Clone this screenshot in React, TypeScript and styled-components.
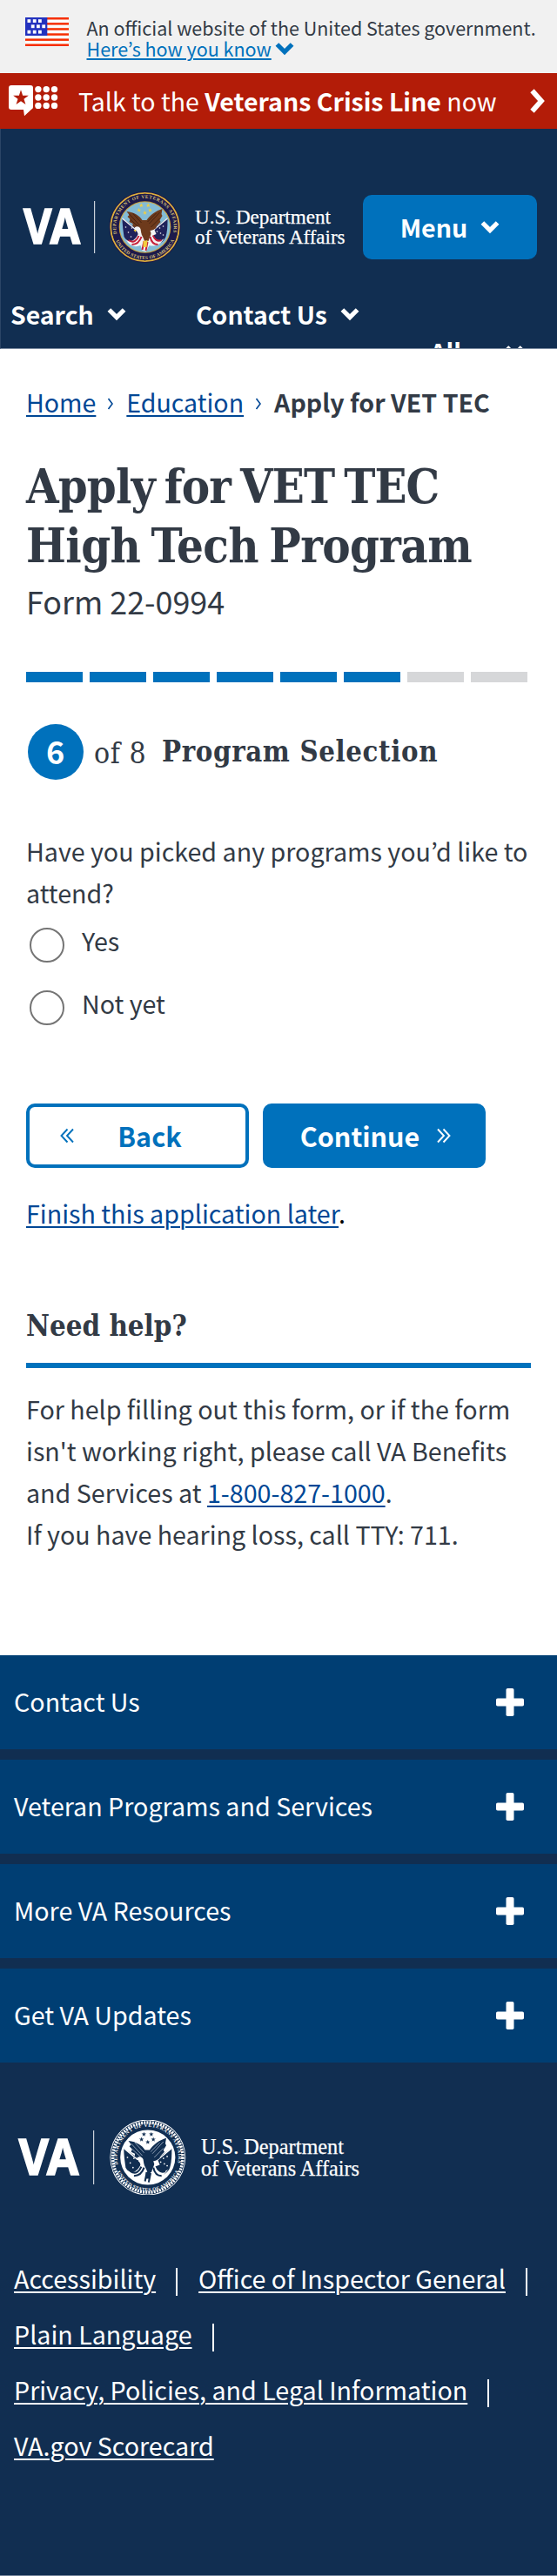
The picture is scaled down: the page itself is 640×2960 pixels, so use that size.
import React from "react";
import styled, { createGlobalStyle, css } from "styled-components";

const sans = `"Noto Sans CJK JP", "Noto Sans", sans-serif`;
const slab = `"DejaVu Serif Condensed", "DejaVu Serif", serif`;

const color = {
  ink: "#323a45",
  primary: "#0071bc",
  link: "#004795",
  navy: "#112e51",
  footerBar: "#003e73",
  crisis: "#b31c08",
  gray: "#d6d7d9",
};

const GlobalStyle = createGlobalStyle`
  *, *::before, *::after { box-sizing: border-box; }
  body {
    margin: 0;
    background: #fff;
    color: ${color.ink};
    font-family: ${sans};
    font-size: 28.65px;
    line-height: 48px;
  }
  h1, h2, p, ul, ol, fieldset { margin: 0; padding: 0; border: 0; }
  ul, ol { list-style: none; }
  button { font: inherit; margin: 0; padding: 0; cursor: pointer; }
  svg { display: block; flex: none; }
`;

const Page = styled.div`
  width: 640px;
  overflow: hidden;
`;

/* ---------- government banner ---------- */

const GovBanner = styled.div`
  display: flex;
  height: 84px;
  padding: 20px 0 0 29px;
  background: #f1f1f1;
  font-size: 21.5px;
  line-height: 24px;
`;

const GovText = styled.div`
  margin-left: 20.5px;
  white-space: nowrap;
`;

const GovLink = styled.a`
  color: ${color.primary};
  text-decoration: underline;
  text-decoration-thickness: 2px;
  text-underline-offset: 2px;
`;

const GovToggle = styled.div`
  display: flex;
  align-items: center;
  gap: 4px;
  color: ${color.primary};
`;

/* ---------- crisis line ---------- */

const CrisisLine = styled.a`
  display: flex;
  align-items: center;
  height: 64px;
  padding: 0 12px 0 10px;
  background: ${color.crisis};
  color: #fff;
  font-size: 28.5px;
  white-space: nowrap;
`;

const CrisisText = styled.span`
  margin-left: 23px;
  flex: 1;
`;

/* ---------- header ---------- */

const Header = styled.header`
  height: 253px;
  overflow: hidden;
  background: ${color.navy};
  color: #fff;
  border-left: 1px solid #2b4566;
  border-bottom: 1px solid #75859b;
`;

const HeaderTop = styled.div`
  display: flex;
  align-items: center;
  justify-content: space-between;
  height: 191px;
  padding: 35px 23px 0 0;
`;

const MenuButton = styled.button`
  display: flex;
  align-items: center;
  justify-content: center;
  gap: 15px;
  width: 200px;
  height: 74px;
  border: 0;
  border-radius: 10px;
  background: ${color.primary};
  color: #fff;
  font-weight: 700;
  line-height: 74px;
`;

const UserNav = styled.nav`
  display: flex;
  flex-wrap: wrap;
  line-height: 44px;
  font-size: 28.4px;
  font-weight: 700;
  padding-left: 11px;
`;

const NavItem = styled.a<{ $width?: number }>`
  display: flex;
  align-items: center;
  gap: 15px;
  width: ${(p) => (p.$width ? `${p.$width}px` : "auto")};
  color: #fff;
`;

const NavUser = styled(NavItem)`
  width: 100%;
  justify-content: flex-end;
  padding-right: 38px;
  line-height: 42px;
`;

/* ---------- main ---------- */

const Main = styled.main`
  padding: 37px 30px 0;
`;

const linkStyle = css`
  color: ${color.link};
  text-decoration: underline;
  text-decoration-thickness: 2px;
  text-underline-offset: 3px;
`;

const Link = styled.a`
  ${linkStyle}
`;

const Crumbs = styled.ol`
  display: flex;
  align-items: center;
  font-size: 28.55px;
  white-space: nowrap;
`;

const Crumb = styled.li`
  display: flex;
  align-items: center;
`;

const CrumbArrow = styled.svg`
  margin: 4px 14px 0 13px;
`;

const CurrentCrumb = styled.li`
  font-weight: 700;
`;

const Title = styled.h1`
  margin-top: 39px;
  font-family: ${slab};
  font-size: 54px;
  font-weight: 700;
  line-height: 68px;
  white-space: nowrap;
`;

const TitleLine = styled.span<{ $tracking: number; $word: number }>`
  display: block;
  letter-spacing: ${(p) => p.$tracking}px;
  word-spacing: ${(p) => p.$word}px;
`;

const FormNumber = styled.p`
  margin-top: 5px;
  font-size: 35.9px;
`;

const Progress = styled.div`
  display: flex;
  gap: 8px;
  margin-top: 58px;
  height: 12px;
`;

const Segment = styled.span<{ $done: boolean }>`
  width: 65px;
  background: ${(p) => (p.$done ? color.primary : color.gray)};
`;

const StepHeading = styled.h2`
  display: flex;
  align-items: center;
  height: 64px;
  margin: 48px 0 0 2px;
  font-family: ${slab};
  font-size: 32.6px;
  font-weight: 700;
  letter-spacing: 0.65px;
  white-space: nowrap;
`;

const StepBadge = styled.span`
  width: 64px;
  height: 64px;
  border-radius: 50%;
  background: ${color.primary};
  color: #fff;
  font-family: ${sans};
  font-size: 36px;
  line-height: 61px;
  text-align: center;
`;

const StepTotal = styled.span`
  width: 78px;
  margin: 4px 0 0 12px;
  font-size: 33.5px;
  font-weight: 400;
  letter-spacing: 0.5px;
`;

const Question = styled.fieldset`
  padding-top: 58px;
`;

const RadioList = styled.div`
  margin-top: 7px;
`;

const RadioRow = styled.label`
  display: flex;
  height: 72px;
`;

const Radio = styled.input`
  appearance: none;
  width: 40px;
  height: 40px;
  margin: 9px 20px 0 4px;
  border: 2px solid #757575;
  border-radius: 50%;
  background: #fff;
`;

const ButtonRow = styled.div`
  display: flex;
  gap: 16px;
  margin-top: 67px;
`;

const FormButton = styled.button<{ $outline?: boolean }>`
  display: flex;
  align-items: center;
  justify-content: center;
  width: 256px;
  height: 74px;
  gap: ${(p) => (p.$outline ? 50 : 20)}px;
  padding: ${(p) => (p.$outline ? "0 38px 0 0" : "0 0 0 3px")};
  border: 4px solid ${color.primary};
  border-radius: 10px;
  background: ${(p) => (p.$outline ? "#fff" : color.primary)};
  color: ${(p) => (p.$outline ? color.primary : "#fff")};
  font-size: 30.5px;
  font-weight: 700;
`;

const FinishLater = styled.p`
  margin-top: 28px;
  color: #000;
`;

const HelpHeading = styled.h2`
  height: 68px;
  margin-top: 86px;
  border-bottom: 6px solid ${color.primary};
  font-family: ${slab};
  font-size: 32.8px;
  font-weight: 700;
  line-height: 40px;
`;

const HelpText = styled.div`
  padding: 23px 0 115px;
`;

/* ---------- footer ---------- */

const Footer = styled.footer`
  height: 1058px;
  background: ${color.navy};
  color: #fff;
  border-bottom: 1px solid #75859b;
`;

const FooterSections = styled.ul`
  display: flex;
  flex-direction: column;
  gap: 12px;
`;

const FooterSection = styled.li`
  display: flex;
  align-items: center;
  justify-content: space-between;
  height: 108px;
  padding: 0 38px 3px 16px;
  background: ${color.footerBar};
`;

const PlusIcon = styled.svg`
  margin-top: 3px;
`;

const FooterLogo = styled.div`
  margin-top: 66px;
`;

const FooterLinks = styled.ul`
  display: flex;
  flex-wrap: wrap;
  margin-top: 64px;
  padding-left: 16px;
  line-height: 64px;
`;

const FooterLinkItem = styled.li`
  display: flex;
  align-items: center;

  &:not(:last-child)::after {
    content: "";
    width: 2px;
    height: 32px;
    margin: 8px 24px 0 23px;
    background: #fff;
  }
`;

const FooterLink = styled.a`
  color: #fff;
  text-decoration: underline;
  text-decoration-thickness: 2px;
  text-underline-offset: 3px;
`;

/* ---------- drawings ---------- */

const Flag = () => (
  <svg width="50" height="33" viewBox="0 0 50 33">
    <rect width="50" height="33" fill="#fbfbfb" />
    {[0, 6.1, 12.2, 18.3, 24.4, 30.5].map((y) => (
      <rect key={y} y={y} width="50" height="2.5" fill="#f62e00" />
    ))}
    <rect width="25.3" height="21" fill="#2332be" />
    {[
      [2.5, 2.2], [8.8, 2.2], [15, 2.2],
      [6.8, 8.4], [13, 8.4], [19.3, 8.4],
      [2.5, 14.8], [8.8, 14.8], [15, 14.8],
    ].map(([x, y]) => (
      <rect key={`${x}-${y}`} x={x} y={y} width="3.8" height="3.8" fill="#fff" />
    ))}
  </svg>
);

const ChevronDown = () => (
  <svg width="22" height="16" viewBox="0 0 22 16">
    <path d="M2.4 3 11 11.6 19.6 3" fill="none" stroke="currentColor" strokeWidth="5.2" />
  </svg>
);

const starPoints = (cx: number, cy: number, r: number) =>
  Array.from({ length: 10 }, (_, i) => {
    const rad = (Math.PI / 5) * i - Math.PI / 2;
    const d = i % 2 ? r * 0.39 : r;
    return `${(cx + d * Math.cos(rad)).toFixed(2)},${(cy + d * Math.sin(rad)).toFixed(2)}`;
  }).join(" ");

const CrisisIcon = () => (
  <svg width="57" height="36" viewBox="0 0 57 36">
    <path d="M3 0h22a3 3 0 0 1 3 3v22a3 3 0 0 1-2 2.8L18 35.2 17 28H3a3 3 0 0 1-3-3V3a3 3 0 0 1 3-3Z" fill="#fff" />
    <polygon points={starPoints(14, 14.6, 9.3)} fill={color.crisis} />
    {[4.6, 14, 23.4].map((y) =>
      [33.9, 43.2, 52.5].map((x) => <circle key={`${x}-${y}`} cx={x} cy={y} r="3.7" fill="#fff" />)
    )}
  </svg>
);

const CrisisArrow = () => (
  <svg width="20" height="30" viewBox="0 0 20 30">
    <path d="M3.5 3.2 14 15 3.5 26.8" fill="none" stroke="#fff" strokeWidth="5.8" />
  </svg>
);

const DoubleArrow = ({ left }: { left?: boolean }) => (
  <svg width="16" height="18" viewBox="0 0 16 18">
    <path
      d={left ? "M8.5 1.5 1.5 9l7 7.5M15 1.5 8 9l7 7.5" : "M1 1.5 8 9l-7 7.5M7.5 1.5 14.5 9l-7 7.5"}
      fill="none"
      stroke="currentColor"
      strokeWidth="1.9"
    />
  </svg>
);

const Plus = () => (
  <PlusIcon width="32" height="32" viewBox="0 0 32 32">
    <rect x="0" y="11.5" width="32" height="9" rx="1.8" fill="#fff" />
    <rect x="11.5" y="0" width="9" height="32" rx="1.8" fill="#fff" />
  </PlusIcon>
);

type SealPalette = {
  edge: string; rim: string; band: string; lettering: string; inner: string; sky: string;
  star: string; wing: string; feather: string; flag: string; red: string; white: string;
};

const colorSeal: SealPalette = {
  edge: "#1d1747", rim: "#dcae3c", band: "#1d1a4b", lettering: "#d9c37a", inner: "#cda43e", sky: "#83bbd6",
  star: "#f3cf3f", wing: "#6e3a1c", feather: "#3f1f10", flag: "#20225a", red: "#c5203a", white: "#f4f4f4",
};

const monoSeal: SealPalette = {
  edge: "#fff", rim: "#fff", band: color.navy, lettering: "#fff", inner: "#fff", sky: "#fff",
  star: color.navy, wing: color.navy, feather: "#8fa0b5", flag: color.navy, red: color.navy, white: "#fff",
};

const Seal = ({ id, c, mono }: { id: string; c: SealPalette; mono?: boolean }) => (
  <g>
    <defs>
      <path id={`${id}-top`} d="M-31.9 9.1A33.2 33.2 0 1 1 31.9 9.1" />
      <path id={`${id}-bottom`} d="M-34.6 13A37 37 0 0 0 34.6 13" />
    </defs>
    <circle r="41" fill={c.edge} />
    {mono ? (
      <>
        <circle r="40.2" fill={c.band} />
        <circle r="37.9" fill="none" stroke="#fff" strokeWidth="3.2" strokeDasharray="1.9 1.1" />
      </>
    ) : (
      <>
        <circle r="39.1" fill="none" stroke={c.rim} strokeWidth="1.9" />
        <circle r="38.2" fill={c.band} />
      </>
    )}
    <circle r="29.8" fill={c.inner} />
    <circle r="28.8" fill={c.sky} />
    <g fill={c.lettering} fontFamily="Liberation Serif, serif" fontWeight="700" fontSize="5.4">
      <text>
        <textPath href={`#${id}-top`} textLength="118" startOffset="1.5">DEPARTMENT OF VETERANS AFFAIRS</textPath>
      </text>
      <text>
        <textPath href={`#${id}-bottom`} textLength="84" startOffset="3">UNITED STATES OF AMERICA</textPath>
      </text>
    </g>
    {[[-4.2, -25], [3.8, -25], [-6.8, -19.5], [6, -19.5], [0, -16.5]].map(([x, y]) => (
      <polygon key={`${x}${y}`} points={starPoints(x, y, 2.7)} fill={c.star} />
    ))}
    <path d="M-26-10-9 2-5 9-12 19C-17 19-21 16-24 11-25 4-26-3-26-10Z" fill={c.flag} />
    <path d="M26-10 10 1 6 9 13 19C18 19 22 16 24 11 26 4 26-3 26-10Z" fill={c.flag} />
    <path d="M-26-10-8 5M26-10 9 4" stroke={c.white} strokeWidth="1.3" />
    {[[-22, 0], [-19, 6], [-15, 1], [-16, 11], [21, -1], [17, 1], [18, 7], [21, 9], [14, 5]].map(([x, y]) => (
      <circle key={`${x}${y}`} cx={x} cy={y} r="0.8" fill={c.white} />
    ))}
    <path d="M-22 14C-15 20-9 12-7 6L8 7C10 15 15 19 22 13 18 20 12 23 5 21L1 28-3 27-5 21C-12 24-18 21-22 14Z" fill={c.white} />
    <path
      d="M-19 15C-13 19-9 15-7 10M-15 20C-10 20-6 17-4 11M19 15C14 17 11 14 9 9M15 20C10 20 7 16 6 11M-3 26-1 16M1 27 3 17"
      fill="none"
      stroke={c.red}
      strokeWidth="2"
    />
    <path
      d="M-21-18C-12-17-6-13-3-8L2-8C6-14 13-19 20-21L19-15 20-13 17-8 18-6 13-1 13 1 8 4C7 9 5 12 4 16L0 17-2 12-5 6-10 1-14-1-14-4-18-6-17-9-20-12-18-14Z"
      fill={c.wing}
    />
    <path
      d="M-18-15-6-2M-17-9-7 0M-14-16-4-5M17-17 5-4M17-10 7 0M13-16 3-6"
      stroke={c.feather}
      strokeWidth="0.9"
    />
    <path d="M-12 2C-12-1-7-2-5 2L-4 8-7 10-9 5Z" fill={c.white} />
    <path d="M6 4 11 3 13 8 8 10Z" fill={c.white} />
    <path d="M-13 3-10 3-11 6Z" fill={c.star} />
    <path d="M-2 16 3 15 2 23-2 23Z" fill={mono ? c.wing : c.star} />
  </g>
);

type LogoLayout = {
  height: number; vaX: number; vaWidth: number; vaBase: number; vaSize: number;
  ruleTop: number; ruleBottom: number; sealX: number; sealScale: number;
  nameX: number; firstBase: number; secondBase: number; firstWidth: number; secondWidth: number; nameSize: number;
};

const headerLogo: LogoLayout = {
  height: 82, vaX: 26, vaWidth: 65, vaBase: 59.5, vaSize: 56, ruleTop: 11, ruleBottom: 71, sealX: 165.5, sealScale: 1,
  nameX: 223, firstBase: 37, secondBase: 60, firstWidth: 156, secondWidth: 172.5, nameSize: 24,
};

const footerLogo: LogoLayout = {
  height: 86, vaX: 21.5, vaWidth: 69, vaBase: 62.5, vaSize: 58, ruleTop: 12, ruleBottom: 74, sealX: 169.8, sealScale: 1.06,
  nameX: 231, firstBase: 39, secondBase: 63.5, firstWidth: 164, secondWidth: 182, nameSize: 25,
};

const Logo = ({ layout: l, palette, mono }: { layout: LogoLayout; palette: SealPalette; mono?: boolean }) => (
  <svg width="414" height={l.height} viewBox={`0 0 414 ${l.height}`} fill="#fff">
    <text x={l.vaX} y={l.vaBase} fontFamily="Noto Sans, sans-serif" fontWeight="700" fontSize={l.vaSize}
      stroke="#fff" strokeWidth="1.6" textLength={l.vaWidth} lengthAdjust="spacingAndGlyphs">VA</text>
    <rect x="107" y={l.ruleTop} width="1.2" height={l.ruleBottom - l.ruleTop} fill="#c9d1da" />
    <g transform={`translate(${l.sealX} ${l.height / 2}) scale(${l.sealScale})`}>
      <Seal id={mono ? "seal-mono" : "seal-color"} c={palette} mono={mono} />
    </g>
    <g fontFamily="Liberation Serif, serif" fontSize={l.nameSize} stroke="#fff" strokeWidth="0.25">
      <text x={l.nameX} y={l.firstBase} textLength={l.firstWidth} lengthAdjust="spacingAndGlyphs">U.S. Department</text>
      <text x={l.nameX} y={l.secondBase} textLength={l.secondWidth} lengthAdjust="spacingAndGlyphs">of Veterans Affairs</text>
    </g>
  </svg>
);

const Arrow = () => (
  <CrumbArrow width="8" height="14" viewBox="0 0 8 14">
    <path d="M1.5 1 6 7 1.5 13" fill="none" stroke={color.link} strokeWidth="1.6" />
  </CrumbArrow>
);

/* ---------- page ---------- */

const sections = ["Contact Us", "Veteran Programs and Services", "More VA Resources", "Get VA Updates"];
const footerLinks = [
  "Accessibility",
  "Office of Inspector General",
  "Plain Language",
  "Privacy, Policies, and Legal Information",
  "VA.gov Scorecard",
];
const STEP = 6;
const TOTAL = 8;

export default function App() {
  return (
    <Page>
      <GlobalStyle />
      <GovBanner>
        <Flag />
        <GovText>
          An official website of the United States government.
          <GovToggle>
            <GovLink>Here’s how you know</GovLink>
            <ChevronDown />
          </GovToggle>
        </GovText>
      </GovBanner>

      <CrisisLine>
        <CrisisIcon />
        <CrisisText>
          Talk to the <strong>Veterans Crisis Line</strong> now
        </CrisisText>
        <CrisisArrow />
      </CrisisLine>

      <Header>
        <HeaderTop>
          <Logo layout={headerLogo} palette={colorSeal} />
          <MenuButton>
            Menu <ChevronDown />
          </MenuButton>
        </HeaderTop>
        <UserNav>
          <NavItem $width={213}>
            Search <ChevronDown />
          </NavItem>
          <NavItem>
            Contact Us <ChevronDown />
          </NavItem>
          <NavUser>
            Allen <ChevronDown />
          </NavUser>
        </UserNav>
      </Header>

      <Main>
        <Crumbs>
          <Crumb>
            <Link>Home</Link>
            <Arrow />
          </Crumb>
          <Crumb>
            <Link>Education</Link>
            <Arrow />
          </Crumb>
          <CurrentCrumb>Apply for VET TEC</CurrentCrumb>
        </Crumbs>

        <Title>
          <TitleLine $tracking={-0.9} $word={-5}>Apply for VET TEC</TitleLine>
          <TitleLine $tracking={-0.6} $word={-4}>High Tech Program</TitleLine>
        </Title>
        <FormNumber>Form 22-0994</FormNumber>

        <Progress>
          {Array.from({ length: TOTAL }, (_, i) => (
            <Segment key={i} $done={i < STEP} />
          ))}
        </Progress>

        <StepHeading>
          <StepBadge>{STEP}</StepBadge>
          <StepTotal>of {TOTAL}</StepTotal>
          Program Selection
        </StepHeading>

        <Question>
          <p>Have you picked any programs you’d like to attend?</p>
          <RadioList>
            <RadioRow>
              <Radio type="radio" name="picked" />
              Yes
            </RadioRow>
            <RadioRow>
              <Radio type="radio" name="picked" />
              Not yet
            </RadioRow>
          </RadioList>
        </Question>

        <ButtonRow>
          <FormButton $outline>
            <DoubleArrow left /> Back
          </FormButton>
          <FormButton>
            Continue <DoubleArrow />
          </FormButton>
        </ButtonRow>

        <FinishLater>
          <Link>Finish this application later</Link>.
        </FinishLater>

        <HelpHeading>Need help?</HelpHeading>
        <HelpText>
          <p>
            For help filling out this form, or if the form isn't working right, please call VA Benefits and Services
            at <Link>1-800-827-1000</Link>.
          </p>
          <p>If you have hearing loss, call TTY: 711.</p>
        </HelpText>
      </Main>

      <Footer>
        <FooterSections>
          {sections.map((s) => (
            <FooterSection key={s}>
              {s}
              <Plus />
            </FooterSection>
          ))}
        </FooterSections>
        <FooterLogo>
          <Logo layout={footerLogo} palette={monoSeal} mono />
        </FooterLogo>
        <FooterLinks>
          {footerLinks.map((l) => (
            <FooterLinkItem key={l}>
              <FooterLink>{l}</FooterLink>
            </FooterLinkItem>
          ))}
        </FooterLinks>
      </Footer>
    </Page>
  );
}
